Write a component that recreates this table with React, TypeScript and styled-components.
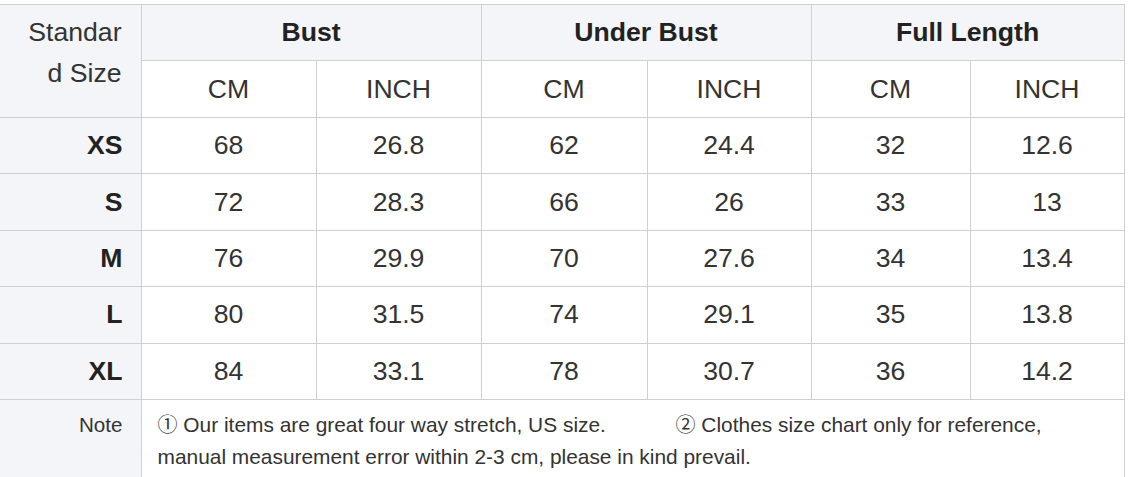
import React from "react";
import styled, { createGlobalStyle } from "styled-components";

const Global = createGlobalStyle`
  html, body { margin: 0; padding: 0; background: #ffffff; }
  body { font-family: "Liberation Sans", Arial, sans-serif; color: #333; }
`;

const Wrap = styled.div`
  padding-top: 4px;
  width: 1124px;
`;

const Table = styled.table`
  border-collapse: collapse;
  table-layout: fixed;
  width: 1124px;
  font-family: "Liberation Sans", Arial, sans-serif;
  font-size: 26.6px;
  color: #333;
`;

const Col = styled.col<{ $w: number }>`
  width: ${(p) => p.$w}px;
`;

const Cell = styled.td`
  border: 1px solid #cfcfcf;
  text-align: center;
  vertical-align: middle;
  padding: 0;
  height: 55.45px;
  &:first-child { border-left: none; }
`;

const HeadCell = styled(Cell)`
  background: #f3f5f8;
  font-weight: bold;
  color: #222;
`;

const SubCell = styled(Cell)`
  background: #ffffff;
`;

const CornerCell = styled(Cell)`
  background: #f3f5f8;
  text-align: right;
  vertical-align: top;
  padding: 7px 19px 0 22px;
  line-height: 41px;
  word-break: break-all;
`;

const SizeCell = styled(Cell)`
  background: #f3f5f8;
  text-align: right;
  font-weight: bold;
  color: #222;
  padding-right: 18px;
`;

const NoteLabel = styled(Cell)`
  background: #f3f5f8;
  text-align: right;
  vertical-align: top;
  font-size: 20.6px;
  line-height: 32px;
  padding: 9px 18px 0 0;
  height: 90px;
`;

const NoteText = styled(Cell)`
  text-align: left;
  vertical-align: top;
  font-size: 20.9px;
  line-height: 32px;
  padding: 9px 20px 0 16px;
  height: 90px;
  white-space: pre-wrap;
`;

const Circ = styled.span`
  font-family: "Noto Sans CJK SC", "DejaVu Sans", sans-serif;
  font-size: 20px;
  line-height: 1;
`;

const widths = [141, 175, 165, 166, 164, 159, 154];

const rows: [string, string[]][] = [
  ["XS", ["68", "26.8", "62", "24.4", "32", "12.6"]],
  ["S", ["72", "28.3", "66", "26", "33", "13"]],
  ["M", ["76", "29.9", "70", "27.6", "34", "13.4"]],
  ["L", ["80", "31.5", "74", "29.1", "35", "13.8"]],
  ["XL", ["84", "33.1", "78", "30.7", "36", "14.2"]],
];

export default function App() {
  return (
    <Wrap>
      <Global />
      <Table>
        <colgroup>
          {widths.map((w, i) => (
            <Col key={i} $w={w} />
          ))}
        </colgroup>
        <tbody>
          <tr>
            <CornerCell rowSpan={2}>Standard Size</CornerCell>
            <HeadCell colSpan={2}>Bust</HeadCell>
            <HeadCell colSpan={2}>Under Bust</HeadCell>
            <HeadCell colSpan={2}>Full Length</HeadCell>
          </tr>
          <tr>
            {["CM", "INCH", "CM", "INCH", "CM", "INCH"].map((t, i) => (
              <SubCell key={i}>{t}</SubCell>
            ))}
          </tr>
          {rows.map(([size, vals]) => (
            <tr key={size}>
              <SizeCell>{size}</SizeCell>
              {vals.map((v, i) => (
                <Cell key={i}>{v}</Cell>
              ))}
            </tr>
          ))}
          <tr>
            <NoteLabel>Note</NoteLabel>
            <NoteText colSpan={6}>
              <Circ>①</Circ> Our items are great four way stretch, US size.{"            "}
              <Circ>②</Circ> Clothes size chart only for reference, manual measurement error within 2-3 cm, please in kind prevail.
            </NoteText>
          </tr>
        </tbody>
      </Table>
    </Wrap>
  );
}
